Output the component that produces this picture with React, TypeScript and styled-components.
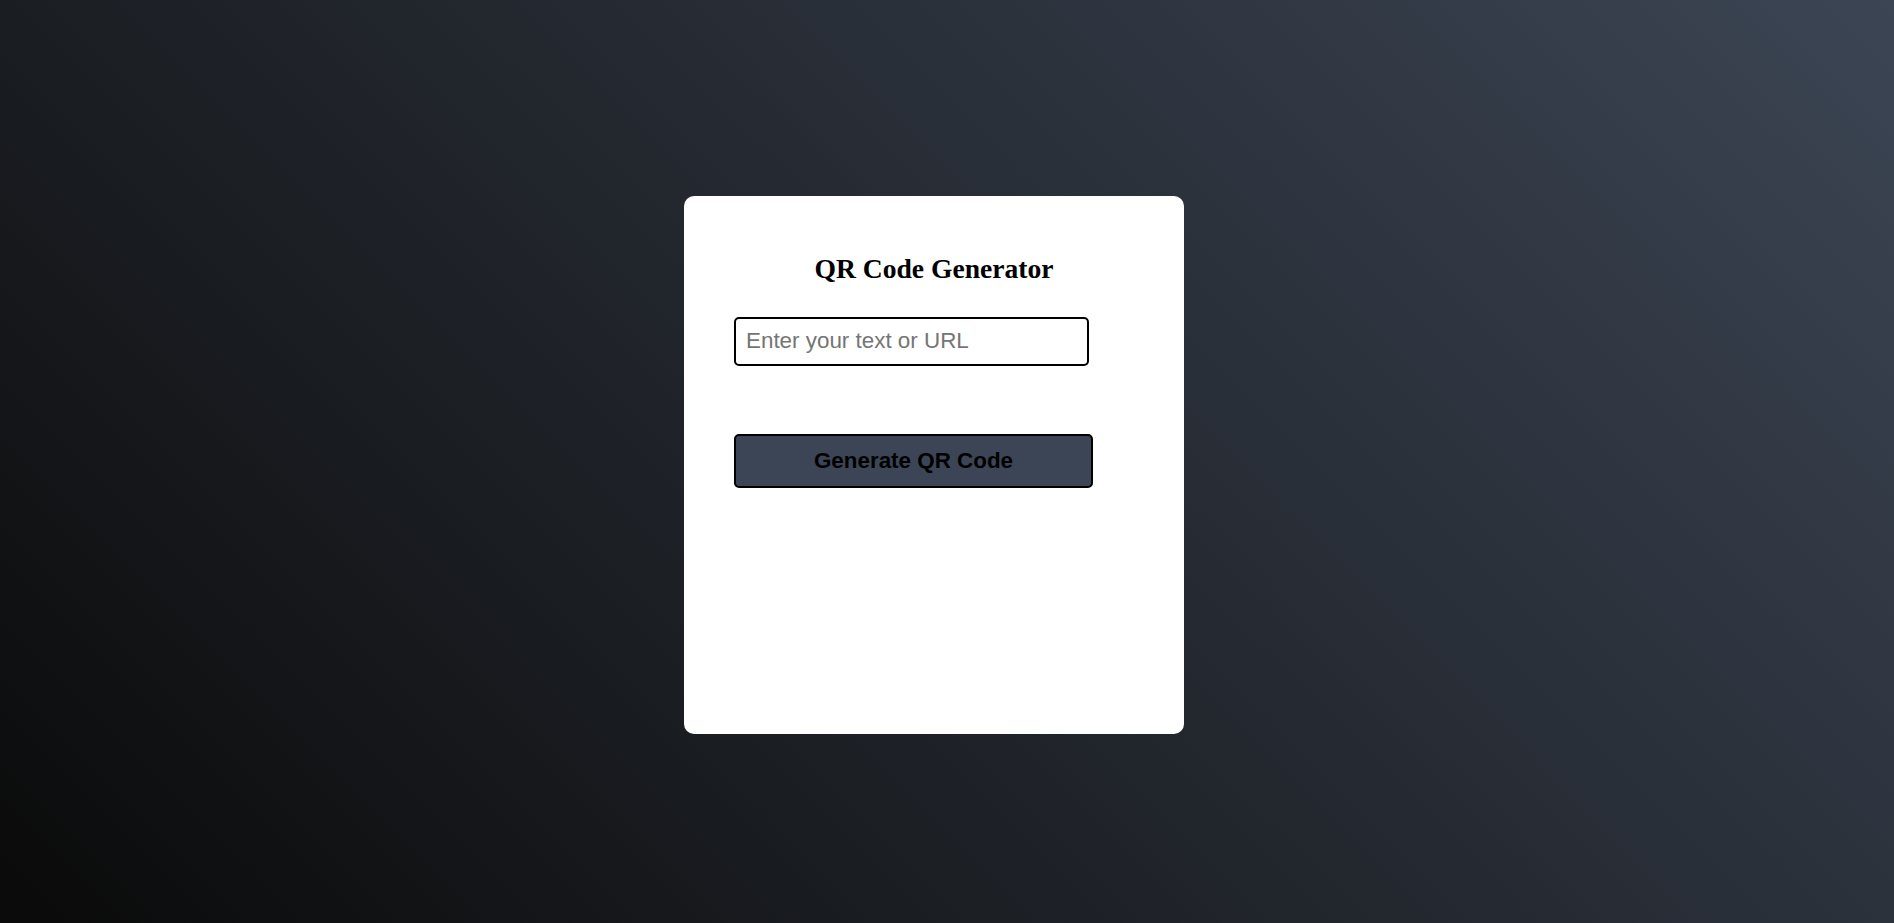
import React, { useState } from "react";
import styled, { createGlobalStyle } from "styled-components";

const GlobalStyle = createGlobalStyle`
  * { box-sizing: border-box; }
  html, body { margin: 0; padding: 0; }
  body { font-family: "Liberation Serif", "Times New Roman", serif; }
`;

const Page = styled.div`
  min-height: 100vh;
  display: flex;
  align-items: center;
  justify-content: center;
  padding: 6px 26px 0 0;
  background: linear-gradient(45deg, #0a0a0a 0%, #3c4554 100%);
`;

const Card = styled.div`
  width: 500px;
  height: 538px;
  background: #ffffff;
  border-radius: 10px;
  padding: 57px 50px 40px;
  display: flex;
  flex-direction: column;
  align-items: flex-start;
`;

const Title = styled.h2`
  align-self: stretch;
  margin: 0 0 32px;
  text-align: center;
  font-family: "Liberation Serif", "Times New Roman", serif;
  font-size: 27.6px;
  font-weight: bold;
  color: #000;
`;

const TextInput = styled.input`
  width: 355px;
  height: 49px;
  padding: 10px;
  border: 2px solid #000;
  border-radius: 5px;
  font-family: "Liberation Sans", Arial, sans-serif;
  font-size: 22.4px;
  color: #000;
  outline: none;
  &::placeholder { color: #757575; }
`;

const GenerateButton = styled.button`
  margin-top: 68px;
  width: 359px;
  height: 54px;
  border: 2px solid #000;
  border-radius: 5px;
  background: #3c4555;
  color: #000;
  font-family: "Liberation Sans", Arial, sans-serif;
  font-size: 22.4px;
  font-weight: bold;
  cursor: pointer;
  padding: 0;
`;

export default function App() {
  const [text, setText] = useState("");
  return (
    <>
      <GlobalStyle />
      <Page>
        <Card>
          <Title>QR Code Generator</Title>
          <TextInput
            type="text"
            placeholder="Enter your text or URL"
            value={text}
            onChange={(e) => setText(e.target.value)}
          />
          <GenerateButton>Generate QR Code</GenerateButton>
        </Card>
      </Page>
    </>
  );
}
